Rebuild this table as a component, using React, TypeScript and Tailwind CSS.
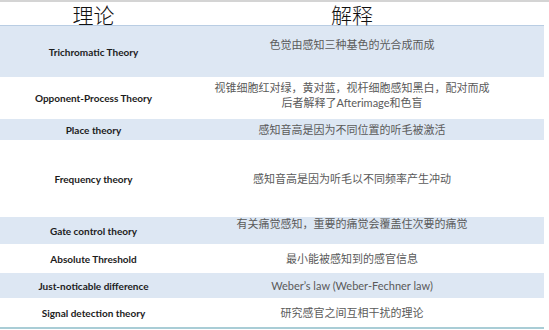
import React from "react";

type Row = {
  left: string;
  right: React.ReactNode;
  h: string;
  blue: boolean;
  shift?: string;
};

const rows: Row[] = [
  { left: "Trichromatic Theory", right: "色觉由感知三种基色的光合成而成", h: "h-[51px]", blue: true, shift: "-translate-y-[7px]" },
  {
    left: "Opponent-Process Theory",
    right: (
      <>
        <div>视锥细胞红对绿，黄对蓝，视杆细胞感知黑白，配对而成</div>
        <div>后者解释了Afterimage和色盲</div>
      </>
    ),
    h: "h-[42px]",
    blue: false,
    shift: "-translate-y-[3px]",
  },
  { left: "Place theory", right: "感知音高是因为不同位置的听毛被激活", h: "h-[21px]", blue: true },
  { left: "Frequency theory", right: "感知音高是因为听毛以不同频率产生冲动", h: "h-[77px]", blue: false },
  { left: "Gate control theory", right: "有关痛觉感知，重要的痛觉会覆盖住次要的痛觉", h: "h-[27px]", blue: true, shift: "-translate-y-[7px]" },
  { left: "Absolute Threshold", right: "最小能被感知到的感官信息", h: "h-[29px]", blue: false },
  { left: "Just-noticable difference", right: "Weber’s law (Weber-Fechner law)", h: "h-[25px]", blue: true },
  { left: "Signal detection theory", right: "研究感官之间互相干扰的理论", h: "h-[29px]", blue: false },
];

export default function App() {
  return (
    <div className="w-[549px] h-[330px] bg-white overflow-hidden">
      <div className="w-[544px]">
        <div className="h-[2px] bg-[#d4d4d4] w-[549px]" />
        <div
          className="grid grid-cols-[187px_1fr] h-[24px] items-center border-b border-[#b9cde3] text-[21px] font-light text-[#111] leading-[24px]"
          style={{ fontFamily: "'Noto Sans CJK SC', sans-serif" }}
        >
          <div className="text-center">理论</div>
          <div className="text-center pr-[27px]">解释</div>
        </div>
        {rows.map((r, i) => (
          <div
            key={i}
            className={`grid grid-cols-[187px_1fr] items-center ${r.h} ${r.blue ? "bg-[#dde7f3]" : "bg-white"}`}
          >
            <div
              className="text-center text-[10px] font-bold text-[#1c1c1c] leading-[12px]"
              style={{ fontFamily: "Lato, sans-serif" }}
            >
              {r.left}
            </div>
            <div
              className={`text-center pr-[27px] text-[11px] leading-[15px] text-[#5a5a5a] ${r.shift ?? ""}`}
              style={{ fontFamily: "Lato, 'Noto Sans CJK SC', sans-serif" }}
            >
              {r.right}
            </div>
          </div>
        ))}
        <div className="h-[2px] bg-[#a9cdd6]" />
      </div>
    </div>
  );
}
